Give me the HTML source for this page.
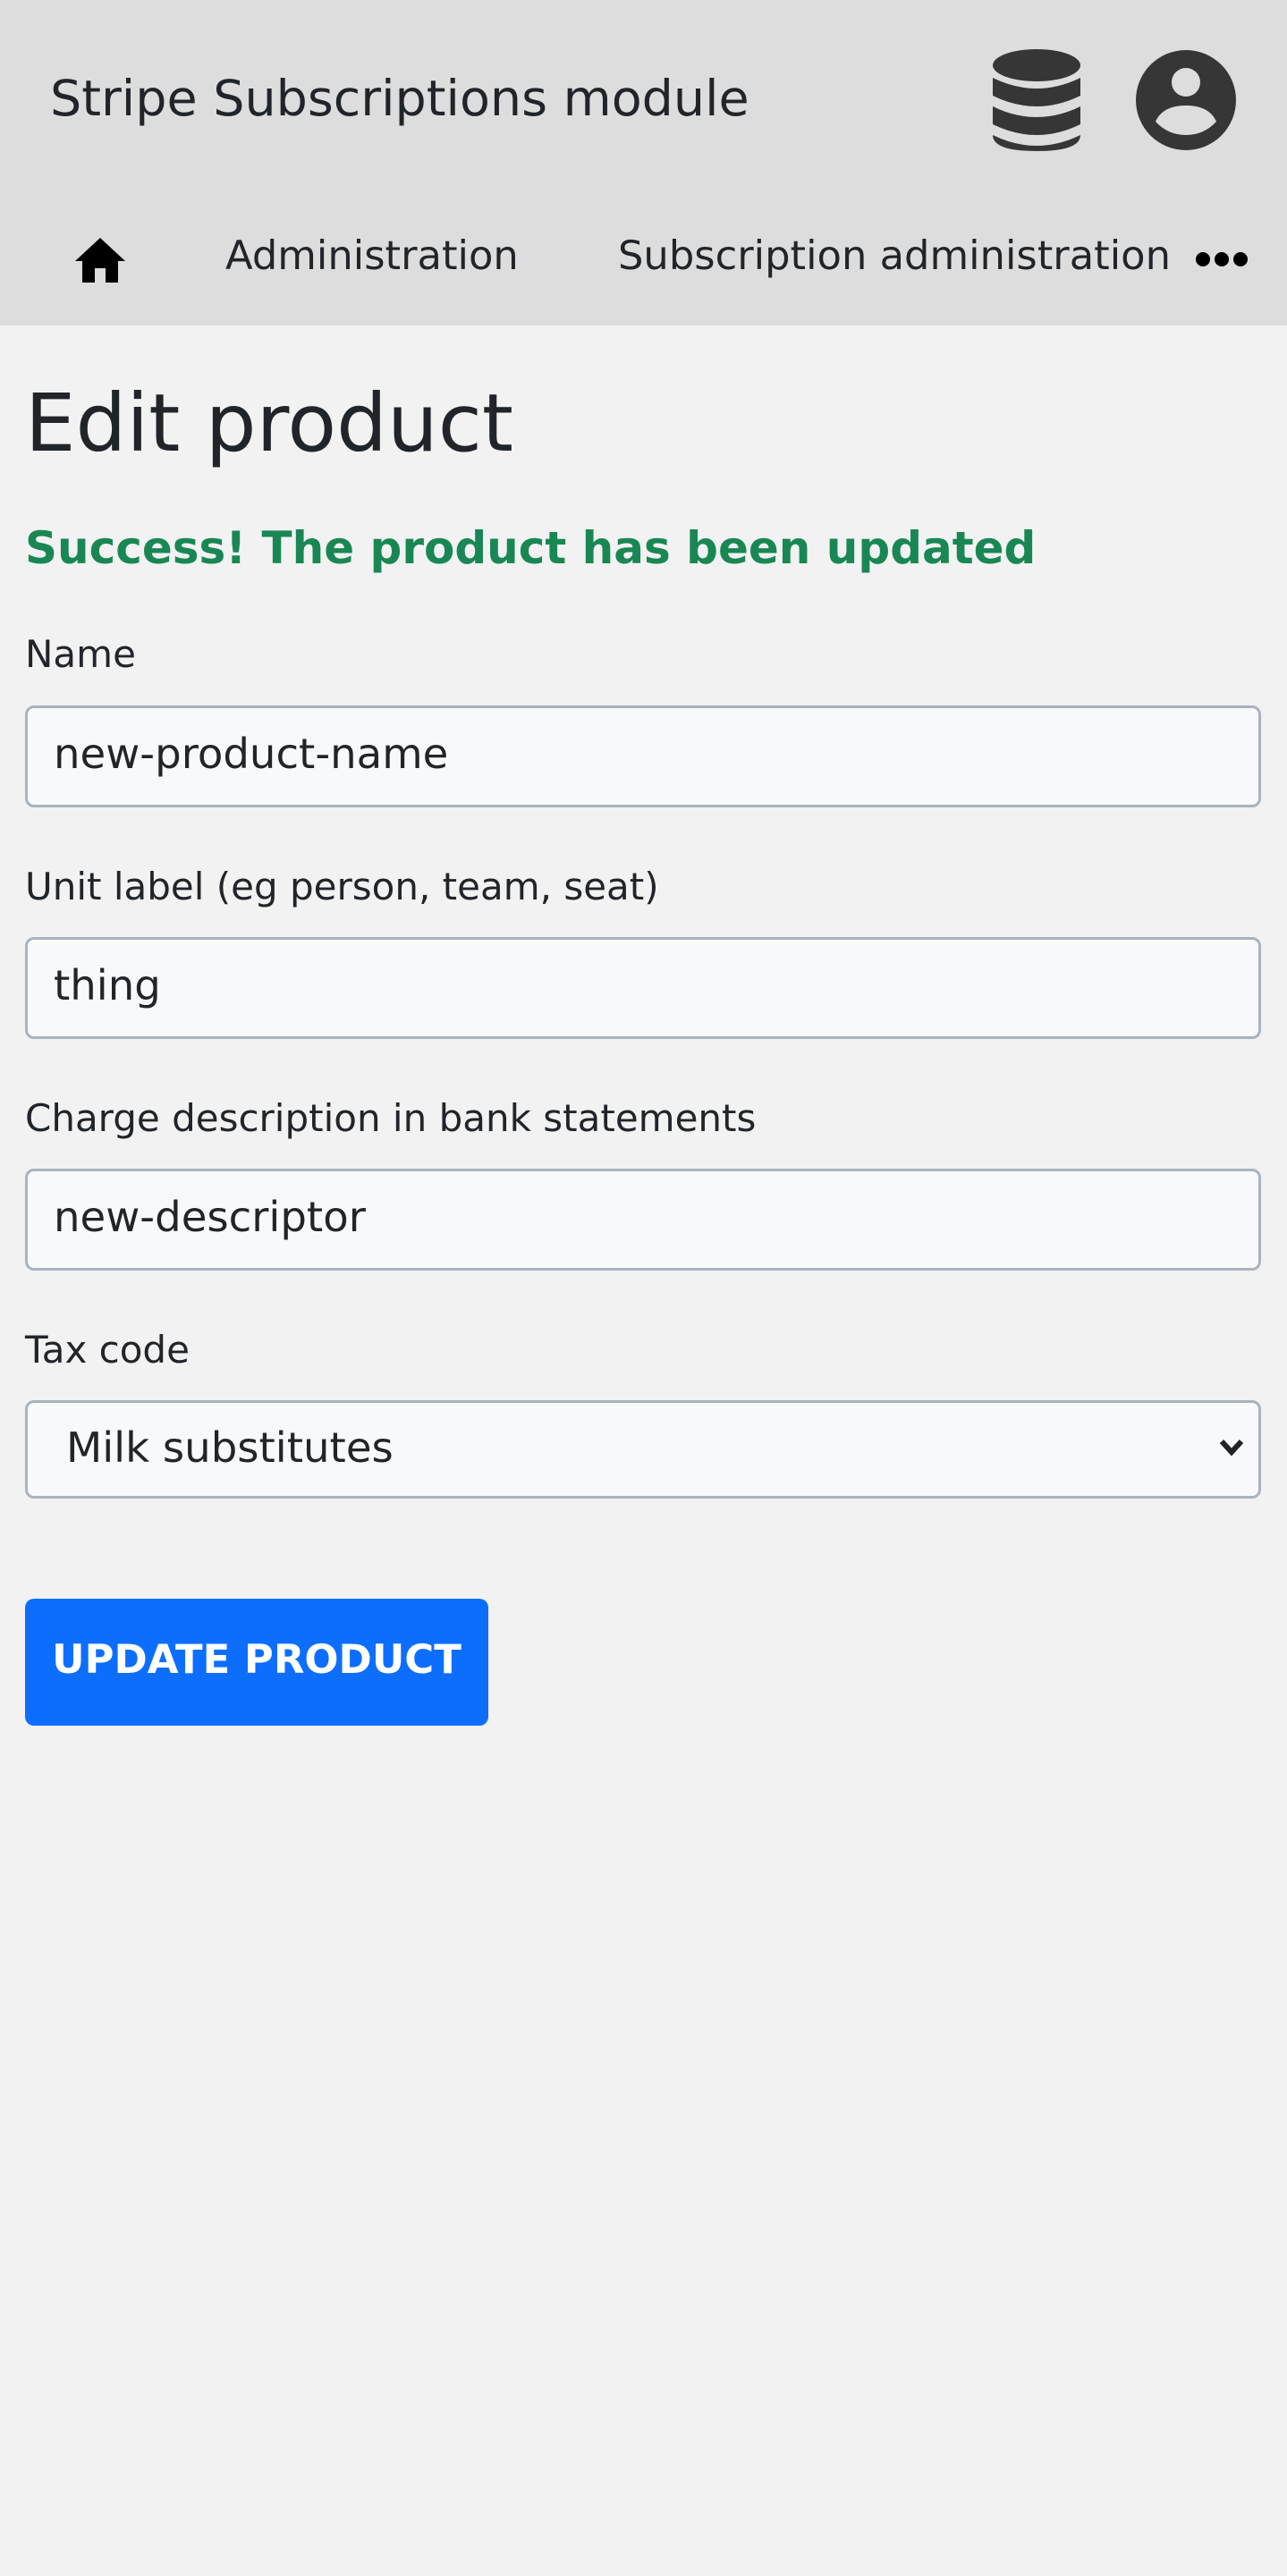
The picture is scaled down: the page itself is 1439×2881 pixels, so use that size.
<!DOCTYPE html>
<html><head><meta charset="utf-8"><style>
*{box-sizing:border-box;margin:0;padding:0}
html,body{width:1439px;height:2881px;background:#f2f2f2;font-family:"DejaVu Sans","Liberation Sans",sans-serif;color:#212529;overflow:hidden}
.a{position:absolute;white-space:nowrap}
.hdr{position:absolute;left:0;top:0;width:1439px;height:364px;background:#dddddd}
.lbl{font-size:42px;line-height:60px;left:28px}
.inp{left:28px;width:1382px;height:114px;background:#f8f9fa;border:3px solid #a9b3be;border-radius:10px;font-size:46.6px;line-height:102px;padding-left:29px}
</style></head><body>
<div class="hdr"></div>
<div class="a" style="left:56px;top:81px;font-size:55.5px;line-height:60px">Stripe Subscriptions module</div>
<svg class="a" style="left:1110px;top:55px" width="98" height="114" viewBox="0 0 98 114">
<ellipse cx="49" cy="18" rx="49" ry="18" fill="#363636"/>
<path d="M0 32 Q49 56 98 32 V52 Q49 76 0 52Z" fill="#363636"/>
<path d="M0 64 Q49 88 98 64 V84 Q49 108 0 84Z" fill="#363636"/>
<path d="M0 96 Q49 120 98 96 V96 Q98 114 49 114 Q0 114 0 96Z" fill="#363636"/>
</svg>
<svg class="a" style="left:1270px;top:56px" width="112" height="112" viewBox="0 0 112 112">
<circle cx="56" cy="56" r="56" fill="#363636"/>
<circle cx="56" cy="36" r="16" fill="#dddddd"/>
<path d="M22 80 Q30 62 56 62 Q82 62 90 80 Q76 95 56 95 Q36 95 22 80Z" fill="#dddddd"/>
</svg>
<svg class="a" style="left:84px;top:266px" width="56" height="50" viewBox="0 0 56 50">
<path d="M28 0 L56 26 H48 V50 H34 V34 H22 V50 H8 V26 H0Z" fill="#000"/>
</svg>
<div class="a" style="left:252px;top:256px;font-size:44.8px;line-height:60px">Administration</div>
<div class="a" style="left:691px;top:256px;font-size:44.8px;line-height:60px">Subscription administration</div>
<svg class="a" style="left:1336px;top:280px" width="60" height="20"><circle cx="9" cy="10" r="8"/><circle cx="30" cy="10" r="8"/><circle cx="51" cy="10" r="8"/></svg>
<div class="a" style="left:28px;top:419px;font-size:89.5px;line-height:110px">Edit product</div>
<div class="a" style="left:28px;top:583px;font-size:50px;line-height:60px;font-weight:bold;color:#198754">Success! The product has been updated</div>
<div class="a lbl" style="top:702px">Name</div>
<div class="a inp" style="top:789px">new-product-name</div>
<div class="a lbl" style="top:962px">Unit label (eg person, team, seat)</div>
<div class="a inp" style="top:1048px">thing</div>
<div class="a lbl" style="top:1221px">Charge description in bank statements</div>
<div class="a inp" style="top:1307px">new-descriptor</div>
<div class="a lbl" style="top:1480px">Tax code</div>
<div class="a inp" style="top:1566px;height:110px;line-height:100px;padding-left:43px">Milk substitutes</div>
<svg class="a" style="left:1362px;top:1606px" width="30" height="26" viewBox="0 0 30 26"><path d="M4 6 L15 18 L26 6" stroke="#212529" stroke-width="6" fill="none"/></svg>
<div class="a" style="left:28px;top:1788px;width:518px;height:142px;background:#0d6efd;border-radius:10px;color:#fff;font-weight:bold;font-size:44.9px;line-height:136px;text-align:center">UPDATE PRODUCT</div>
</body></html>
